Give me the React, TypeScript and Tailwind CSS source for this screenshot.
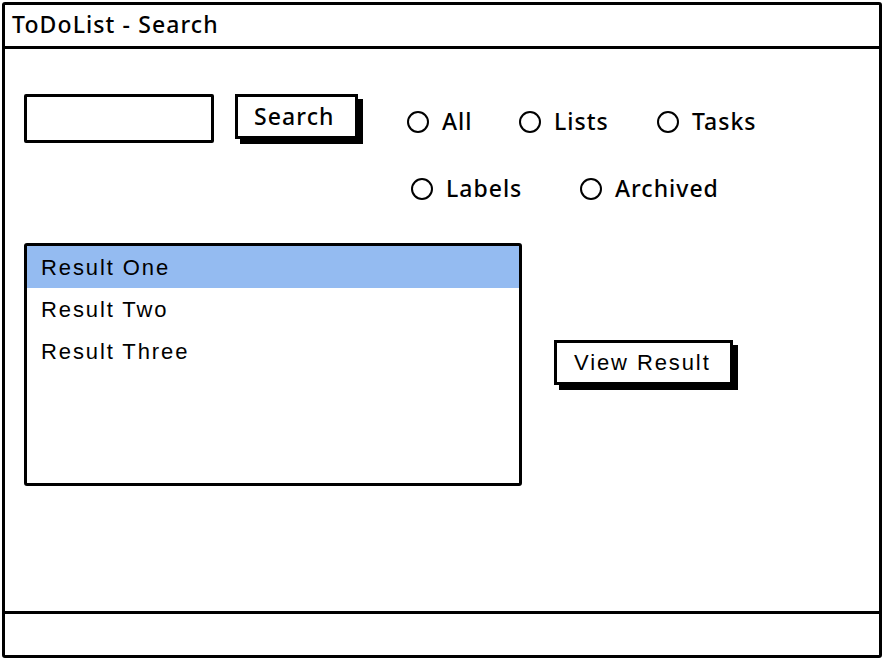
import React from "react";

const sketch = { fontFamily: '"Noto Sans", "Open Sans", sans-serif' };
const arial = { fontFamily: '"Liberation Sans", Arial, sans-serif' };

function Radio({ label, w }: { label: string; w: string }) {
  return (
    <div className={`flex items-center ${w}`}>
      <span className="w-[22px] h-[22px] rounded-full border-2 border-black bg-white shrink-0" />
      <span className="ml-[13px] text-[23px] font-medium tracking-[1px] leading-none text-black" style={sketch}>
        {label}
      </span>
    </div>
  );
}

export default function App() {
  return (
    <div className="w-[884px] h-[660px] bg-white p-[2px]">
      <div className="h-full flex flex-col border-[3px] border-black rounded-[3px]">
        <div className="h-[44px] shrink-0 border-b-[3px] border-black flex items-center pl-[7px]">
          <span className="text-[23px] font-medium tracking-[1.1px] leading-none text-black pb-[2px]" style={sketch}>
            ToDoList - Search
          </span>
        </div>
        <div className="flex-1 pl-[19px] pt-[45px]">
          <div className="flex items-start h-[149px]">
            <div className="w-[190px] h-[49px] border-[3px] border-black rounded-[2px] bg-white" />
            <button
              className="ml-[21px] w-[123px] h-[45px] border-[3px] border-black bg-white shadow-[5px_5px_0_#000] flex items-center pl-[16px] text-[23px] font-medium tracking-[1.1px] text-black"
              style={sketch}
            >
              Search
            </button>
            <div className="ml-[49px] mt-[16px] flex flex-col gap-[44px]">
              <div className="flex">
                <Radio label="All" w="w-[112px]" />
                <Radio label="Lists" w="w-[138px]" />
                <Radio label="Tasks" w="w-[120px]" />
              </div>
              <div className="flex ml-[4px]">
                <Radio label="Labels" w="w-[169px]" />
                <Radio label="Archived" w="w-[140px]" />
              </div>
            </div>
          </div>
          <div className="flex items-start">
            <div className="w-[498px] h-[243px] border-[3px] border-black rounded-[3px] bg-white overflow-hidden">
              {["Result One", "Result Two", "Result Three"].map((r, i) => (
                <div
                  key={r}
                  className={`h-[42px] flex items-center pl-[14px] text-[22px] tracking-[1.9px] text-black ${
                    i === 0 ? "bg-[#94bbf1]" : ""
                  }`}
                  style={arial}
                >
                  {r}
                </div>
              ))}
            </div>
            <button
              className="ml-[32px] mt-[97px] w-[179px] h-[45px] border-[3px] border-black bg-white shadow-[5px_5px_0_#000] flex items-center pl-[17px] text-[22px] tracking-[1.9px] text-black"
              style={arial}
            >
              View Result
            </button>
          </div>
        </div>
        <div className="h-[44px] shrink-0 border-t-[3px] border-black" />
      </div>
    </div>
  );
}
